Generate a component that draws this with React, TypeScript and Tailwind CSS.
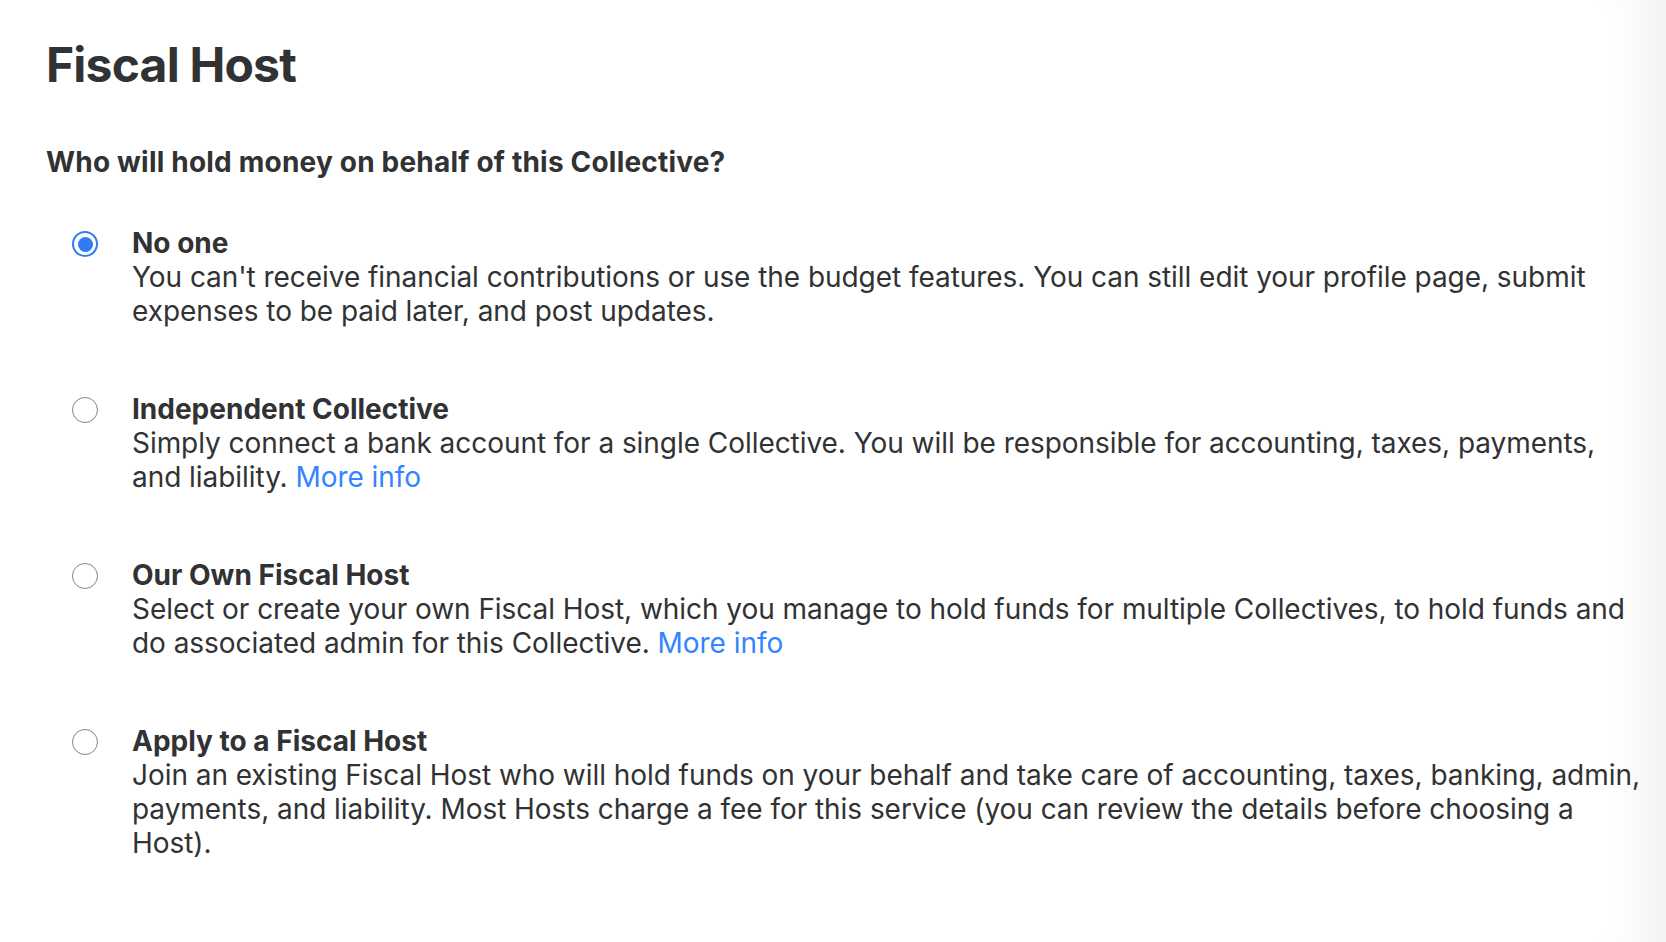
import { useState } from 'react';

const options = [
  {
    id: 'none',
    title: 'No one',
    text: "You can't receive financial contributions or use the budget features. You can still edit your profile page, submit expenses to be paid later, and post updates.",
    link: false,
  },
  {
    id: 'independent',
    title: 'Independent Collective',
    text: 'Simply connect a bank account for a single Collective. You will be responsible for accounting, taxes, payments, and liability.',
    link: true,
  },
  {
    id: 'own',
    title: 'Our Own Fiscal Host',
    text: 'Select or create your own Fiscal Host, which you manage to hold funds for multiple Collectives, to hold funds and do associated admin for this Collective.',
    link: true,
  },
  {
    id: 'apply',
    title: 'Apply to a Fiscal Host',
    text: 'Join an existing Fiscal Host who will hold funds on your behalf and take care of accounting, taxes, banking, admin, payments, and liability. Most Hosts charge a fee for this service (you can review the details before choosing a Host).',
    link: false,
  },
];

export default function App() {
  const [selected, setSelected] = useState('none');

  return (
    <div
      className="min-h-[942px] bg-white text-[#313233] shadow-[inset_-60px_0_50px_-40px_rgba(0,0,0,0.06)]"
      style={{ fontFamily: 'Inter, "Noto Sans", sans-serif' }}
    >
      <div className="pl-[46px] pt-[36px]">
        <h1 className="text-[48px] font-bold leading-[58px] tracking-[-0.8px]">Fiscal Host</h1>
        <h2 className="mt-[50px] text-[28px] font-bold leading-[36px] tracking-[0.2px]">
          Who will hold money on behalf of this Collective?
        </h2>

        <div className="mt-[46px] flex flex-col gap-[64px] pr-[20px]">
          {options.map((opt) => {
            const active = selected === opt.id;
            return (
              <label key={opt.id} className="flex cursor-pointer items-start" onClick={() => setSelected(opt.id)}>
                <div className="flex w-[86px] shrink-0 justify-start pl-[26px] pt-[5px]">
                  {active ? (
                    <span className="flex h-[26px] w-[26px] items-center justify-center rounded-full border-[2.5px] border-[#2f7cf6] bg-white">
                      <span className="h-[15px] w-[15px] rounded-full bg-[#2f7cf6]" />
                    </span>
                  ) : (
                    <span className="h-[26px] w-[26px] rounded-full border-[1.5px] border-[#858585] bg-white" />
                  )}
                </div>
                <div className="flex-1">
                  <div className="text-[28px] font-bold leading-[34px]">{opt.title}</div>
                  <p className="text-[28px] leading-[34px] tracking-[-0.05px]">
                    {opt.text}
                    {opt.link && (
                      <>
                        {' '}
                        <a href="#" className="text-[#3385ff]">More info</a>
                      </>
                    )}
                  </p>
                </div>
              </label>
            );
          })}
        </div>
      </div>
    </div>
  );
}
